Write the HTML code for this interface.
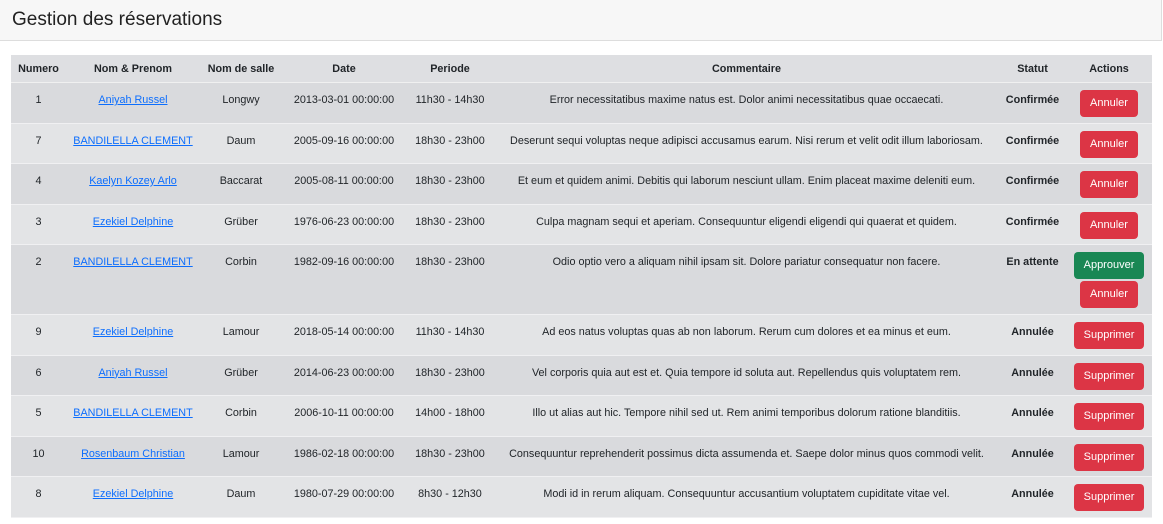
<!DOCTYPE html>
<html><head><meta charset="utf-8"><style>
body{margin:0;background:#fff;font-family:"Liberation Sans",sans-serif;width:1163px;height:524px;overflow:hidden}
.hd{height:41px;background:#f7f7f7;border-bottom:1px solid #ddd;border-right:1px solid #ddd;box-sizing:border-box;width:1162px}
.hd h1{margin:0;font-weight:normal;font-size:19px;padding:9px 0 0 12px;color:#222}
table{position:absolute;left:11px;top:55px;width:1141px;border-collapse:collapse;font-size:10.8px;color:#212529;table-layout:fixed}
th{background:#dedfe2;height:27px;padding:0;font-weight:bold;text-align:center;border-bottom:1px solid #f0f0f0}
td{text-align:center;vertical-align:top;padding:11px 2px 0;height:28.5px;border-bottom:1px solid #f0f0f2}
tr.o td{background:#d9dadd}
tr.e td{background:#e3e4e6}
a{color:#0d6efd;text-decoration:underline}
td b{font-weight:bold}
.btn{display:inline-block;color:#fff;border-radius:4px;font-size:11px;line-height:27px;height:27px;padding:0 10px;margin-top:-4px}
.r{background:#dc3545}.g{background:#198754}
</style></head><body>
<div class="hd"><h1>Gestion des réservations</h1></div>
<table>
<colgroup><col style="width:55px"><col style="width:134px"><col style="width:82px"><col style="width:124px"><col style="width:88px"><col style="width:505px"><col style="width:67px"><col style="width:86px"></colgroup>
<tr><th>Numero</th><th>Nom &amp; Prenom</th><th>Nom de salle</th><th>Date</th><th>Periode</th><th>Commentaire</th><th>Statut</th><th>Actions</th></tr>
<tr class="o"><td>1</td><td><a>Aniyah Russel</a></td><td>Longwy</td><td>2013-03-01 00:00:00</td><td>11h30 - 14h30</td><td>Error necessitatibus maxime natus est. Dolor animi necessitatibus quae occaecati.</td><td><b>Confirmée</b></td><td><span class="btn r">Annuler</span></td></tr>
<tr class="e"><td>7</td><td><a>BANDILELLA CLEMENT</a></td><td>Daum</td><td>2005-09-16 00:00:00</td><td>18h30 - 23h00</td><td>Deserunt sequi voluptas neque adipisci accusamus earum. Nisi rerum et velit odit illum laboriosam.</td><td><b>Confirmée</b></td><td><span class="btn r">Annuler</span></td></tr>
<tr class="o"><td>4</td><td><a>Kaelyn Kozey Arlo</a></td><td>Baccarat</td><td>2005-08-11 00:00:00</td><td>18h30 - 23h00</td><td>Et eum et quidem animi. Debitis qui laborum nesciunt ullam. Enim placeat maxime deleniti eum.</td><td><b>Confirmée</b></td><td><span class="btn r">Annuler</span></td></tr>
<tr class="e"><td>3</td><td><a>Ezekiel Delphine</a></td><td>Grüber</td><td>1976-06-23 00:00:00</td><td>18h30 - 23h00</td><td>Culpa magnam sequi et aperiam. Consequuntur eligendi eligendi qui quaerat et quidem.</td><td><b>Confirmée</b></td><td><span class="btn r">Annuler</span></td></tr>
<tr class="o"><td style="height:58px">2</td><td><a>BANDILELLA CLEMENT</a></td><td>Corbin</td><td>1982-09-16 00:00:00</td><td>18h30 - 23h00</td><td>Odio optio vero a aliquam nihil ipsam sit. Dolore pariatur consequatur non facere.</td><td><b>En attente</b></td><td><span class="btn g">Approuver</span><br><span class="btn r" style="margin-top:2px">Annuler</span></td></tr>
<tr class="e"><td>9</td><td><a>Ezekiel Delphine</a></td><td>Lamour</td><td>2018-05-14 00:00:00</td><td>11h30 - 14h30</td><td>Ad eos natus voluptas quas ab non laborum. Rerum cum dolores et ea minus et eum.</td><td><b>Annulée</b></td><td><span class="btn r">Supprimer</span></td></tr>
<tr class="o"><td>6</td><td><a>Aniyah Russel</a></td><td>Grüber</td><td>2014-06-23 00:00:00</td><td>18h30 - 23h00</td><td>Vel corporis quia aut est et. Quia tempore id soluta aut. Repellendus quis voluptatem rem.</td><td><b>Annulée</b></td><td><span class="btn r">Supprimer</span></td></tr>
<tr class="e"><td>5</td><td><a>BANDILELLA CLEMENT</a></td><td>Corbin</td><td>2006-10-11 00:00:00</td><td>14h00 - 18h00</td><td>Illo ut alias aut hic. Tempore nihil sed ut. Rem animi temporibus dolorum ratione blanditiis.</td><td><b>Annulée</b></td><td><span class="btn r">Supprimer</span></td></tr>
<tr class="o"><td>10</td><td><a>Rosenbaum Christian</a></td><td>Lamour</td><td>1986-02-18 00:00:00</td><td>18h30 - 23h00</td><td>Consequuntur reprehenderit possimus dicta assumenda et. Saepe dolor minus quos commodi velit.</td><td><b>Annulée</b></td><td><span class="btn r">Supprimer</span></td></tr>
<tr class="e"><td>8</td><td><a>Ezekiel Delphine</a></td><td>Daum</td><td>1980-07-29 00:00:00</td><td>8h30 - 12h30</td><td>Modi id in rerum aliquam. Consequuntur accusantium voluptatem cupiditate vitae vel.</td><td><b>Annulée</b></td><td><span class="btn r">Supprimer</span></td></tr>
</table>
</body></html>
